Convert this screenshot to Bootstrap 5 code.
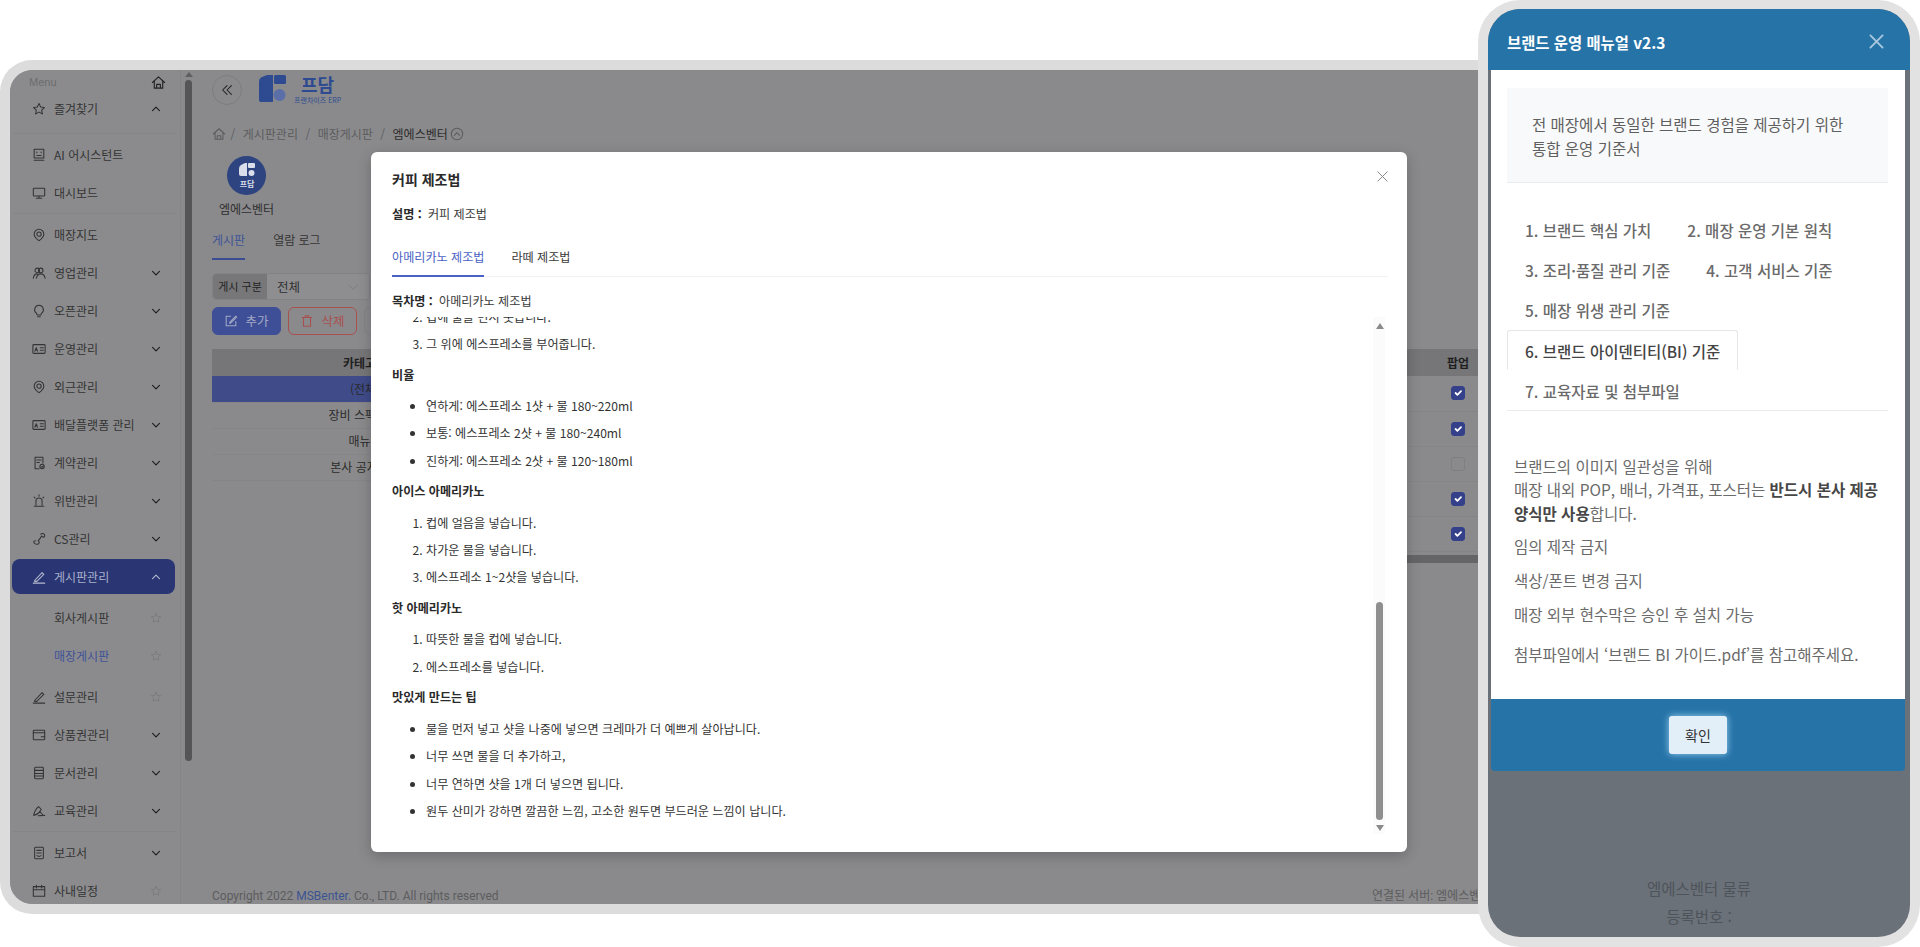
<!doctype html>
<html lang="ko">
<head>
<meta charset="utf-8">
<title>브랜드 운영 매뉴얼</title>
<link rel="stylesheet" href="https://cdn.jsdelivr.net/npm/bootstrap@5.3.0/dist/css/bootstrap.min.css">
<style>
html,body{height:100%;margin:0;background:#fff;overflow:hidden}
body{font-family:"Noto Sans CJK KR","Noto Sans",sans-serif;font-size:12px;color:#2e2e2e}
.desk{position:relative;width:1920px;height:947px;overflow:hidden}
.win-app{position:absolute;left:0;top:60px;width:1500px;height:854px;border:10px solid #dcdcdc;border-right:0;border-radius:32px 0 0 32px;overflow:hidden;background:#8a8a8c}
.win-inner{position:relative;height:834px;border-radius:22px 0 0 22px;overflow:hidden}
.ic{width:14px;height:14px;fill:none;stroke:currentColor;stroke-width:1.2;stroke-linecap:round;stroke-linejoin:round;flex:none}
.side{width:171px;flex:none;background:#8b8b8d;border-right:1px solid #858587;overflow:hidden}
.side-menu{height:24px;padding:0 14px 0 19px;color:#6b6b6d;font-family:"Liberation Sans",sans-serif;font-size:11px}
.side-menu .ic{color:#222;width:15px;height:15px}
.side-row{height:38px;margin:0 5px 0 2px;padding:0 14px 0 20px;color:#343434;gap:8px}
.side-row.is-fav{height:30px}
.side-row>span{flex:1;white-space:nowrap}
.side-row .cv{width:10px;height:10px;stroke:#1d1d1d;stroke-width:1.8}
.side-row .st{width:12px;height:12px;stroke:#7b7b7d;margin-right:-1px}
.side-row.is-on{height:35px;margin-top:1px;margin-bottom:2px;background:#2a3674;border-radius:8px;color:#a9afca}
.side-row.is-on .ic{stroke:#b5bacf}
.side-row.is-sub>span{padding-left:22px}
.side-row.is-cur{color:#3f5299}
.sep-a{height:12px;padding-top:9px}
.sep-b{height:4px;padding-top:1px}
.sep-a::after,.sep-b::after{content:"";display:block;height:1px;margin:0 3px;background:#858587}
.pad-sub-t{height:3px}
.track{width:11px;flex:none;padding:2px 0 0 4px;background:#8a8a8c}
.track-up{width:0;height:0;margin:0 0 3px 0;border:4px solid transparent;border-top:0;border-bottom:5px solid #5f5f61}
.track-thumb{width:7px;height:681px;border-radius:4px;background:#555557}
.app-main{flex:1;min-width:0;padding:5px 22px 0 20px}
.round-btn{width:30px;height:30px;border:1px solid #7d7d7f;border-radius:50%;color:#222}
.brand-word{font-size:18px;line-height:19px;font-weight:700;color:#2e4a90;text-align:center}
.brand-sub{font-size:7px;line-height:10px;color:#2e4a90;margin-top:1px;white-space:nowrap}
.logo-wrap{margin-left:17px;gap:8px}
.crumbs{height:18px;margin-top:20px;color:#5c5c5e;gap:6px}
.crumbs b{font-weight:400;color:#2b2b2b}
.crumbs i{font-style:normal;color:#5c5c5e;padding:0 1.5px}
.crumbs .ic{width:14px;height:14px}
.crumbs>.ic:first-child{margin-right:-3px}
.crumbs .crumb-up{margin-left:-3.5px}
.store{width:62px;margin:13px 0 0 3.5px;text-align:center}
.store-ava{width:39px;height:39px;margin:0 auto 5px;border-radius:50%;background:#2d4480}
.tab-row{gap:28px;margin-top:13px;border-bottom:0}
.tab-row .tab-a{display:block;height:29px;color:#353535;text-decoration:none;line-height:18px}
.tab-row .is-act{color:#3f5399;border-bottom:2px solid #3a4d93}
.filter{height:27px;margin-top:13px;width:158px;border:1px solid #828284;border-radius:5px;overflow:hidden}
.filter-l{width:54px;background:#777779;font-size:11px;color:#232323;line-height:25px;text-align:center}
.filter-v{flex:1;padding:0 10px;line-height:25px;background:#8e8e90;color:#303030;font-size:12.5px}
.filter-v .ic{width:12px;height:12px;stroke:#7c7c7e}
.act-row{gap:7px;margin-top:7px}
.act{height:28px;width:69px;padding:0;font-size:12.5px;border-radius:6px;display:flex;align-items:center;justify-content:center;gap:7px}
.act-add{background:#3e4f98;border:1px solid #3e4f98;color:#a3a9c6}
.act-del{background:transparent;border:1px solid #a9504f;color:#a9504f}
.act-x{background:transparent;border:1px solid #838385;color:#555}
.grid-wrap{margin-top:14px;height:214px;position:relative}
.tb{--bs-table-bg:transparent;--bs-table-color:#2a2a2a;margin:0;font-size:12px}
.tb th,.tb td{padding:0;text-align:center;vertical-align:middle;border:0}
.tb th{height:27px;background:#767678;font-weight:700;color:#1f1f1f}
.tb-l{width:306px;flex:none}
.tb-l td{height:26px;border-bottom:1px solid #858587}
.tb-l tr.is-sel td{background:#404c8a;color:#2a2a2a}
.tb-r{flex:1;min-width:0}
.tb-r td{height:35px;border-bottom:1px solid #858587}
.tb-r .col-pop{width:40px}
.form-check-input.ck{float:none;margin:0;width:14px;height:14px;display:block;margin-inline:auto;border-radius:3px;background-color:transparent;border:1px solid #7f7f81;opacity:1}
.form-check-input.ck:checked{background-color:#34408a;border-color:#34408a}
.hscroll{position:absolute;left:330px;right:0;bottom:0;height:8px;background:#656567}
.foot{position:absolute;left:202px;right:22px;bottom:0;height:15px;line-height:15px;color:#5c5c5e;justify-content:space-between;font-family:Roboto,"Noto Sans CJK KR",sans-serif}
.foot em{font-style:normal;color:#3b5491}
.foot-r{width:106px;overflow:hidden;white-space:nowrap}
.dlg{position:absolute;left:361px;top:82px;width:1036px;height:700px;padding:18px 19px 0 21px;background:#fff;border-radius:6px;box-shadow:0 4px 14px rgba(0,0,0,.22);color:#333;font-size:12.1px}
.dlg-x{position:absolute;right:19px;top:19px;width:11px;height:11px;stroke:#8a8a8a;fill:none;stroke-width:1}
.dlg-title{font-size:14px;line-height:18px;font-weight:700;color:#2a2a2a}
.dlg-line{line-height:18px;color:#3a3a3a}
.dlg-line b{font-weight:700;color:#2a2a2a;margin-right:3px}
.dlg-desc{margin-top:17px}
.dlg-toc{margin-top:15px}
.dlg-tabs{margin-top:25px;border-bottom:1px solid #f1f1f1;height:29px;gap:27px}
.dlg-tabs a{display:block;height:29px;line-height:18px;color:#3a3a3a;text-decoration:none}
.dlg-tabs a.is-act{color:#4a62c4;border-bottom:2px solid #4a62c4}
.art-box{height:517px;margin-top:7px;overflow:hidden}
.art{flex:1;min-width:0;overflow:hidden}
.art-in{margin-top:-9.5px}
.art h6{margin:12.7px 0 13.3px;font-size:12.1px;line-height:18px;font-weight:700;color:#2a2a2a}
.art ol,.art ul{margin:0;padding-left:34px}
.art li{line-height:18px;margin-bottom:9.4px}
.art ul{list-style:disc}
.vbar{width:12px;margin-right:3px;flex:none;padding:6px 2px 3px 3px;background:#fbfbfb}
.vbar-up,.vbar-dn{width:0;height:0;margin:0 auto;border:4px solid transparent}
.vbar-up{border-top:0;border-bottom:6px solid #8a8a8a}
.vbar-dn{border-bottom:0;border-top:6px solid #8a8a8a;margin-top:5px}
.vbar-th{height:218px;width:7px;border-radius:4px;background:#8f8f8f;margin-top:auto}
.win-man{position:absolute;left:1478px;top:0;width:442px;height:947px;border:10px solid #e2e2e2;border-top-width:9px;border-radius:42px;overflow:hidden;background:#6b7178;font-size:15.5px;color:#666}
.man-h{height:61px;padding:4px 26px 0 19px;background:#2673a8;color:#fff;font-weight:700;line-height:24px;font-size:15.4px}
.man-h .ic{width:15px;height:15px;stroke:#a9c8dd;stroke-width:2}
.man-b{height:629px;margin:0 5px 0 3px;padding:18px 17px 0 16px;background:#fff}
.man-info{height:95px;padding:24px 25px 0;line-height:24px;background:#f8f9fa;border-bottom:1px solid #e9ecef;color:#5f5f5f}
.man-tabs{margin-top:26px;border-bottom:1px solid #e9ecef;--bs-nav-tabs-border-width:0}
.man-tabs .nav-link{padding:8px 17px;height:40.2px;line-height:24px;color:#6a6a6a;font-weight:500;border:1px solid transparent;margin:0;border-radius:3px 3px 0 0;background:transparent}
.man-tabs .nav-link.active{color:#444;background:#fff;border-color:#e6e6e6 #e6e6e6 #fff}
.man-txt{padding:44px 0 0 7px;margin-right:-5px;line-height:23.4px;color:#6a6a6a}
.man-txt p{margin:0 0 10.3px}
.man-txt b{color:#474747;font-weight:700}
.man-txt p.tail{margin-top:16.5px}
.man-f{height:72px;margin:0 5px 0 3px;background:#2673a8;border-radius:0 0 4px 4px}
.man-ok{width:58px;height:38px;padding:0;background:#e3eff8;border:0;border-radius:3px;color:#333;font-size:14px;box-shadow:0 0 7px #9bd0f0}
.man-ft{margin-top:103px;text-align:center;line-height:28px;color:#4e545b}
</style>
</head>
<body>
<svg width="0" height="0" class="position-absolute" aria-hidden="true">
 <symbol id="i-star" viewBox="0 0 16 16"><path d="M8 1.8l1.9 3.9 4.3.6-3.1 3 .7 4.3L8 11.6l-3.8 2 .7-4.3-3.1-3 4.3-.6z"/></symbol>
 <symbol id="i-bot" viewBox="0 0 16 16"><rect x="2.5" y="1.5" width="11" height="10"/><path d="M5.5 4.5v1M10.5 4.5v1M5.5 8.5h5M2.5 14h11"/></symbol>
 <symbol id="i-mon" viewBox="0 0 16 16"><rect x="1.5" y="2.5" width="13" height="9" rx="1"/><path d="M8 11.5v2.5M5 14h6"/></symbol>
 <symbol id="i-pin" viewBox="0 0 16 16"><path d="M8 1.5A5.5 5.5 0 0 1 13.5 7c0 3.500-3.500 6-5.500 7.500C6 13 2.500 10.500 2.500 7A5.500 5.500 0 0 1 8 1.500z"/><circle cx="8" cy="7" r="2.500"/></symbol>
 <symbol id="i-ppl" viewBox="0 0 16 16"><circle cx="6" cy="5" r="2.600"/><circle cx="10" cy="5" r="2.600"/><path d="M1.500 14c.4-3 2-5 4.500-5M5 14c.6-3 2.500-5 5-5s4.500 2 5 5"/></symbol>
 <symbol id="i-bulb" viewBox="0 0 16 16"><path d="M8 1.500a5 5 0 0 0-3 9l1 2h4l1-2a5 5 0 0 0-3-9zM6.500 14.500h3"/></symbol>
 <symbol id="i-id" viewBox="0 0 16 16"><rect x="1" y="3" width="14" height="10" rx="1"/><path d="M3.300 10.500l1.500-4 1.500 4M3.800 9h2M9.500 6.500h3.500M9.500 9.500h3.500"/></symbol>
 <symbol id="i-con" viewBox="0 0 16 16"><path d="M12.500 8V1.500h-9v13H8M5.500 4.500h5M5.500 7.500h3"/><circle cx="11.500" cy="12" r="2.500"/><path d="M10.500 12l1 1 1.200-1.500"/></symbol>
 <symbol id="i-sir" viewBox="0 0 16 16"><path d="M4.500 12.500V8a3.500 3.500 0 0 1 7 0v4.500M2.500 14h11M8 1v1.500M2.500 3.500l1 1M13.500 3.500l-1 1"/></symbol>
 <symbol id="i-tel" viewBox="0 0 16 16"><path d="M10 2.500c1.500-1.500 4-1 4.500 1 .5 1.500-1 3-2.500 2l-1-1c-.5 1-1.500 3.500-4 5.500l1 1c.8 1-.2 3-2 3-2 .3-4-1.200-4-2.500 0-1 1-1.500 2-1.500"/></symbol>
 <symbol id="i-pen" viewBox="0 0 16 16"><path d="M3 12l8.500-9 2 2L5.500 13H3zM1.500 15h13"/></symbol>
 <symbol id="i-wal" viewBox="0 0 16 16"><rect x="1.500" y="2.500" width="13" height="11" rx="1"/><path d="M1.500 5.500h13M10.500 10h4"/></symbol>
 <symbol id="i-doc" viewBox="0 0 16 16"><rect x="3" y="1.500" width="10" height="13" rx="1"/><path d="M3 5h10M3 8.500h10M3 11.500h10"/></symbol>
 <symbol id="i-edu" viewBox="0 0 16 16"><path d="M2 13c.6-4 3-8 5.500-10l3 3c-1 3-5 6-8.500 7zM7 13.500l7.500-.5M8.500 8.500l3.500 3.500"/></symbol>
 <symbol id="i-rep" viewBox="0 0 16 16"><rect x="3" y="1.500" width="10" height="13" rx="1"/><path d="M5.500 5h5M5.500 8h5M5.500 11c1.500 1 3.500 1 5 0"/></symbol>
 <symbol id="i-cal" viewBox="0 0 16 16"><rect x="1.500" y="3" width="13" height="11"/><path d="M1.500 6.500h13M5 1.500v3M11 1.500v3"/></symbol>
 <symbol id="i-home" viewBox="0 0 16 16"><path d="M1.500 8L8 2l6.500 6M3.500 6.500V14h9V6.500M6 14v-4h4v4"/></symbol>
 <symbol id="i-dn" viewBox="0 0 16 16"><path d="M2.500 5.500L8 11l5.500-5.500"/></symbol>
 <symbol id="i-up" viewBox="0 0 16 16"><path d="M2.500 10.500L8 5l5.500 5.500"/></symbol>
 <symbol id="i-x" viewBox="0 0 16 16"><path d="M1.500 1.500l13 13M14.500 1.500l-13 13"/></symbol>
</svg>

<div class="desk">
 <section class="win-app">
  <div class="win-inner d-flex">
   <nav class="side">
    <div class="side-menu d-flex align-items-center justify-content-between"><span>Menu</span><svg class="ic"><use href="#i-home"/></svg></div>
    <div class="side-row is-fav d-flex align-items-center"><svg class="ic"><use href="#i-star"/></svg><span>즐겨찾기</span><svg class="ic cv"><use href="#i-up"/></svg></div>
    <div class="sep-a"></div>
    <div class="side-row d-flex align-items-center"><svg class="ic"><use href="#i-bot"/></svg><span>AI 어시스턴트</span></div>
    <div class="side-row d-flex align-items-center"><svg class="ic"><use href="#i-mon"/></svg><span>대시보드</span></div>
    <div class="sep-b"></div>
    <div class="side-row d-flex align-items-center"><svg class="ic"><use href="#i-pin"/></svg><span>매장지도</span></div>
    <div class="side-row d-flex align-items-center"><svg class="ic"><use href="#i-ppl"/></svg><span>영업관리</span><svg class="ic cv"><use href="#i-dn"/></svg></div>
    <div class="side-row d-flex align-items-center"><svg class="ic"><use href="#i-bulb"/></svg><span>오픈관리</span><svg class="ic cv"><use href="#i-dn"/></svg></div>
    <div class="side-row d-flex align-items-center"><svg class="ic"><use href="#i-id"/></svg><span>운영관리</span><svg class="ic cv"><use href="#i-dn"/></svg></div>
    <div class="side-row d-flex align-items-center"><svg class="ic"><use href="#i-pin"/></svg><span>외근관리</span><svg class="ic cv"><use href="#i-dn"/></svg></div>
    <div class="side-row d-flex align-items-center"><svg class="ic"><use href="#i-id"/></svg><span>배달플랫폼 관리</span><svg class="ic cv"><use href="#i-dn"/></svg></div>
    <div class="side-row d-flex align-items-center"><svg class="ic"><use href="#i-con"/></svg><span>계약관리</span><svg class="ic cv"><use href="#i-dn"/></svg></div>
    <div class="side-row d-flex align-items-center"><svg class="ic"><use href="#i-sir"/></svg><span>위반관리</span><svg class="ic cv"><use href="#i-dn"/></svg></div>
    <div class="side-row d-flex align-items-center"><svg class="ic"><use href="#i-tel"/></svg><span>CS관리</span><svg class="ic cv"><use href="#i-dn"/></svg></div>
    <div class="side-row is-on d-flex align-items-center"><svg class="ic"><use href="#i-pen"/></svg><span>게시판관리</span><svg class="ic cv"><use href="#i-up"/></svg></div>
    <div class="pad-sub-t"></div>
    <div class="side-row is-sub d-flex align-items-center"><span>회사게시판</span><svg class="ic st"><use href="#i-star"/></svg></div>
    <div class="side-row is-sub is-cur d-flex align-items-center"><span>매장게시판</span><svg class="ic st"><use href="#i-star"/></svg></div>
    <div class="pad-sub-t"></div>
    <div class="side-row d-flex align-items-center"><svg class="ic"><use href="#i-pen"/></svg><span>설문관리</span><svg class="ic st"><use href="#i-star"/></svg></div>
    <div class="side-row d-flex align-items-center"><svg class="ic"><use href="#i-wal"/></svg><span>상품권관리</span><svg class="ic cv"><use href="#i-dn"/></svg></div>
    <div class="side-row d-flex align-items-center"><svg class="ic"><use href="#i-doc"/></svg><span>문서관리</span><svg class="ic cv"><use href="#i-dn"/></svg></div>
    <div class="side-row d-flex align-items-center"><svg class="ic"><use href="#i-edu"/></svg><span>교육관리</span><svg class="ic cv"><use href="#i-dn"/></svg></div>
    <div class="sep-b"></div>
    <div class="side-row d-flex align-items-center"><svg class="ic"><use href="#i-rep"/></svg><span>보고서</span><svg class="ic cv"><use href="#i-dn"/></svg></div>
    <div class="side-row d-flex align-items-center"><svg class="ic"><use href="#i-cal"/></svg><span>사내일정</span><svg class="ic st"><use href="#i-star"/></svg></div>
   </nav>
   <div class="track"><div class="track-up"></div><div class="track-thumb"></div></div>
   <main class="app-main">
    <div class="d-flex align-items-start">
     <div class="round-btn d-flex align-items-center justify-content-center">
      <svg class="ic" viewBox="0 0 16 16"><path d="M8 3L3 8l5 5M13 3L8 8l5 5"/></svg>
     </div>
     <div class="logo-wrap d-flex">
      <svg width="27" height="27" viewBox="0 0 27 27"><path fill="#2e4a90" d="M0 7Q0 3 3 2L8 0h6v27H2q-2 0-2-2z"/><rect x="15" y="0" width="12" height="9" rx="1.500" fill="#2e4a90"/><circle cx="20.500" cy="20" r="6" fill="#5a6ea8"/></svg>
      <div><div class="brand-word">프담</div><div class="brand-sub">프랜차이즈 ERP</div></div>
     </div>
    </div>
    <div class="crumbs d-flex align-items-center">
     <svg class="ic"><use href="#i-home"/></svg><i>/</i><span>게시판관리</span><i>/</i><span>매장게시판</span><i>/</i><b>엠에스벤터</b>
     <svg class="ic crumb-up" viewBox="0 0 16 16"><circle cx="8" cy="8" r="6.500"/><path d="M5 9.500L8 6.500l3 3"/></svg>
    </div>
    <div class="store">
     <div class="store-ava d-flex align-items-center justify-content-center">
      <svg width="22" height="26" viewBox="0 0 22 26"><path fill="#d9deea" d="M3 6Q3 3 5 2l4-2h2v13H5q-2 0-2-2z"/><rect x="12" y="0" width="7" height="5" rx="1" fill="#d9deea"/><circle cx="15.500" cy="10" r="3" fill="#d9deea"/><text x="11" y="24" font-size="8" font-weight="700" text-anchor="middle" fill="#d9deea" font-family="Noto Sans CJK KR">프담</text></svg>
     </div>
     <div>엠에스벤터</div>
    </div>
    <div class="tab-row d-flex">
     <a class="tab-a is-act" href="#">게시판</a><a class="tab-a" href="#">열람 로그</a>
    </div>
    <div class="filter d-flex">
     <div class="filter-l">게시 구분</div>
     <div class="filter-v d-flex align-items-center justify-content-between"><span>전체</span><svg class="ic"><use href="#i-dn"/></svg></div>
    </div>
    <div class="act-row d-flex">
     <button class="btn act act-add"><svg class="ic" viewBox="0 0 16 16"><path d="M13.500 8.500v5h-11v-11h5M6.500 9.500l7-7 1 1-7 7h-1z"/></svg>추가</button>
     <button class="btn act act-del"><svg class="ic" viewBox="0 0 16 16"><path d="M2.500 4h11M6 4V2h4v2M4 4v10h8V4"/></svg>삭제</button>
     <button class="btn act act-x">수정</button>
    </div>
    <div class="grid-wrap d-flex">
     <div class="tb-l">
      <table class="table tb"><thead><tr><th>카테고리</th></tr></thead>
      <tbody><tr class="is-sel"><td>(전체)</td></tr><tr><td>장비 스펙 자료</td></tr><tr><td>매뉴얼</td></tr><tr><td>본사 공지사항</td></tr></tbody></table>
     </div>
     <div class="tb-r">
      <table class="table tb"><thead><tr><th></th><th class="col-pop">팝업</th></tr></thead>
      <tbody>
       <tr><td></td><td><input class="form-check-input ck" type="checkbox" checked aria-label="팝업"></td></tr>
       <tr><td></td><td><input class="form-check-input ck" type="checkbox" checked aria-label="팝업"></td></tr>
       <tr><td></td><td><input class="form-check-input ck" type="checkbox" aria-label="팝업"></td></tr>
       <tr><td></td><td><input class="form-check-input ck" type="checkbox" checked aria-label="팝업"></td></tr>
       <tr><td></td><td><input class="form-check-input ck" type="checkbox" checked aria-label="팝업"></td></tr>
      </tbody></table>
     </div>
     <div class="hscroll"></div>
    </div>
   </main>
   <footer class="foot d-flex">
    <div>Copyright 2022 <em>MSBenter.</em> Co., LTD. All rights reserved</div>
    <div class="foot-r">연결된 서버: 엠에스벤터 물류</div>
   </footer>

   <div class="dlg">
    <svg class="dlg-x" viewBox="0 0 11 11"><path d="M.5.5l10 10M10.500.5l-10 10"/></svg>
    <div class="dlg-title">커피 제조법</div>
    <div class="dlg-line dlg-desc"><b>설명 :</b> 커피 제조법</div>
    <div class="dlg-tabs d-flex">
     <a class="is-act" href="#">아메리카노 제조법</a><a href="#">라떼 제조법</a>
    </div>
    <div class="dlg-line dlg-toc"><b>목차명 :</b> 아메리카노 제조법</div>
    <div class="art-box d-flex">
     <div class="art"><div class="art-in">
      <ol start="2"><li>컵에 물을 먼저 붓습니다.</li><li>그 위에 에스프레소를 부어줍니다.</li></ol>
      <h6>비율</h6>
      <ul><li>연하게: 에스프레소 1샷 + 물 180~220ml</li><li>보통: 에스프레소 2샷 + 물 180~240ml</li><li>진하게: 에스프레소 2샷 + 물 120~180ml</li></ul>
      <h6>아이스 아메리카노</h6>
      <ol><li>컵에 얼음을 넣습니다.</li><li>차가운 물을 넣습니다.</li><li>에스프레소 1~2샷을 넣습니다.</li></ol>
      <h6>핫 아메리카노</h6>
      <ol><li>따뜻한 물을 컵에 넣습니다.</li><li>에스프레소를 넣습니다.</li></ol>
      <h6>맛있게 만드는 팁</h6>
      <ul><li>물을 먼저 넣고 샷을 나중에 넣으면 크레마가 더 예쁘게 살아납니다.</li><li>너무 쓰면 물을 더 추가하고,</li><li>너무 연하면 샷을 1개 더 넣으면 됩니다.</li><li>원두 산미가 강하면 깔끔한 느낌, 고소한 원두면 부드러운 느낌이 납니다.</li></ul>
     </div></div>
     <div class="vbar d-flex flex-column"><div class="vbar-up"></div><div class="vbar-th"></div><div class="vbar-dn"></div></div>
    </div>
   </div>
  </div>
 </section>

 <section class="win-man">
  <div class="man-h d-flex align-items-center justify-content-between"><span>브랜드 운영 매뉴얼 v2.3</span><svg class="ic"><use href="#i-x"/></svg></div>
  <div class="man-b">
   <div class="man-info">전 매장에서 동일한 브랜드 경험을 제공하기 위한<br>통합 운영 기준서</div>
   <ul class="nav nav-tabs man-tabs">
    <li class="nav-item"><a class="nav-link" href="#">1. 브랜드 핵심 가치</a></li>
    <li class="nav-item"><a class="nav-link" href="#">2. 매장 운영 기본 원칙</a></li>
    <li class="nav-item"><a class="nav-link" href="#">3. 조리·품질 관리 기준</a></li>
    <li class="nav-item"><a class="nav-link" href="#">4. 고객 서비스 기준</a></li>
    <li class="nav-item"><a class="nav-link" href="#">5. 매장 위생 관리 기준</a></li>
    <li class="nav-item"><a class="nav-link active" href="#">6. 브랜드 아이덴티티(BI) 기준</a></li>
    <li class="nav-item"><a class="nav-link" href="#">7. 교육자료 및 첨부파일</a></li>
   </ul>
   <div class="man-txt">
    <p>브랜드의 이미지 일관성을 위해<br>매장 내외 POP, 배너, 가격표, 포스터는 <b>반드시 본사 제공 양식만 사용</b>합니다.</p>
    <p>임의 제작 금지</p>
    <p>색상/폰트 변경 금지</p>
    <p>매장 외부 현수막은 승인 후 설치 가능</p>
    <p class="tail">첨부파일에서 ‘브랜드 BI 가이드.pdf’를 참고해주세요.</p>
   </div>
  </div>
  <div class="man-f d-flex align-items-center justify-content-center"><button class="btn man-ok">확인</button></div>
  <div class="man-ft">엠에스벤터 물류<br>등록번호 :</div>
 </section>
</div>
<script src="https://cdn.jsdelivr.net/npm/bootstrap@5.3.0/dist/js/bootstrap.bundle.min.js"></script>
</body>
</html>
